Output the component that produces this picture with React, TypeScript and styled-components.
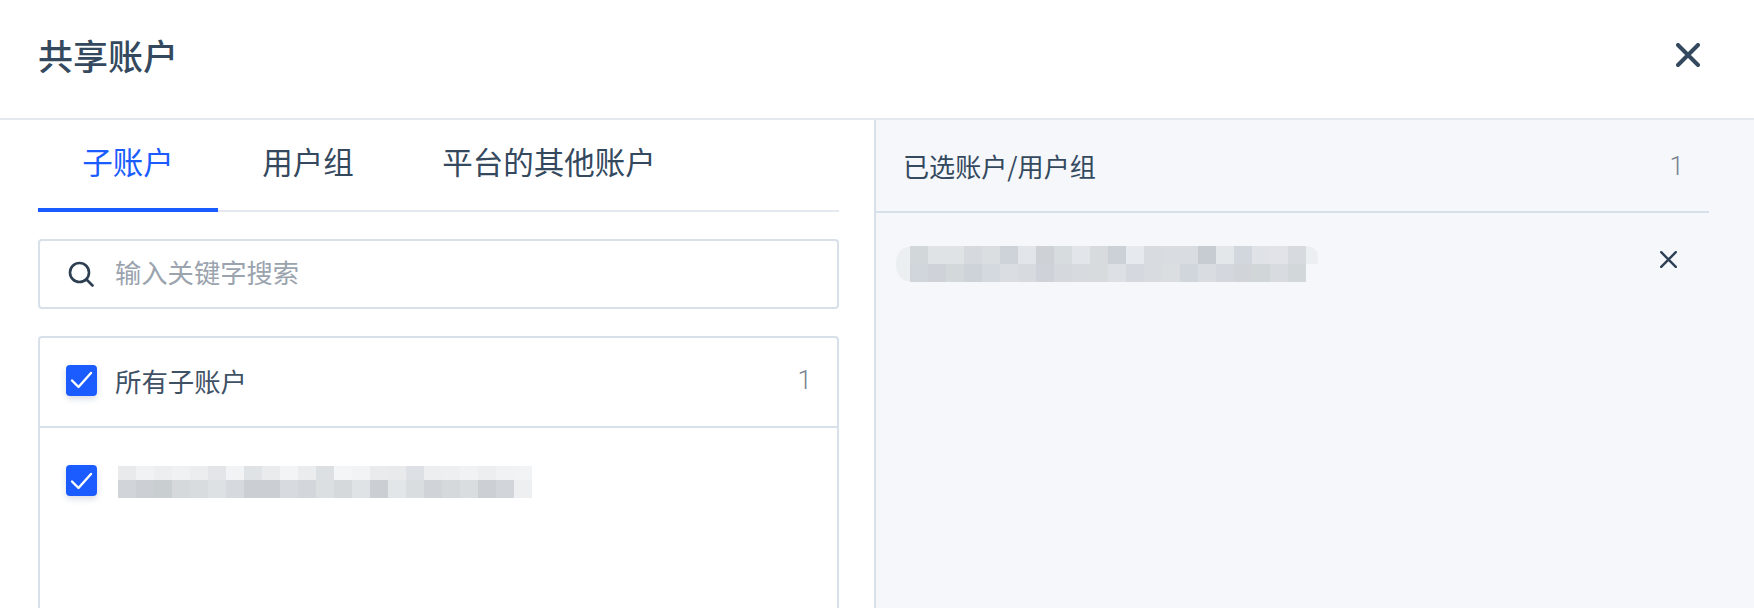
import React from 'react';

import styled, { createGlobalStyle } from 'styled-components';

const GlobalStyle = createGlobalStyle`
  html, body {
    margin: 0;
    padding: 0;
    background: #fff;
  }
  * {
    box-sizing: border-box;
  }
`;

const CELL = 18;

const LEFT_MOSAIC = [
  ['e9eaec', 'f1f2f3', 'edeeef', 'f0f1f2', 'ecedee', 'e3e5e8', 'f2f3f5', 'dfe3e6', 'eaebed', 'f3f4f5', 'ebecee', 'dce0e3', 'f4f5f7', 'f2f3f5', 'eaebed', 'e9eaec', 'dde0e4', 'edeef0', 'eeeff1', 'f1f2f3', 'eceeef', 'f1f2f3', 'f2f3f4'],
  ['d1d4d8', 'ccd0d4', 'c9ced1', 'd5d9dc', 'd8dcdf', 'dde1e4', 'd6d9de', 'cbced2', 'cbced2', 'd7dade', 'd3d6da', 'dbdfe2', 'd6d9dc', 'dfe3e6', 'cbced3', 'e3e6e9', 'd9dde0', 'd0d3d8', 'd6d9dc', 'd9dde0', 'ccd0d4', 'd2d5da', 'eeeff1'],
];

const RIGHT_MOSAIC = [
  ['ced2d6', 'dde0e4', 'dde0e4', 'd2d5d9', 'd7dade', 'c9cdd5', 'e1e4e9', 'c9cdd2', 'd4d8dc', 'e0e3e8', 'd3d7da', 'c7cbd3', 'e5e8ed', 'd5d8dd', 'd6d9de', 'd6d9de', 'c1c5cd', 'e2e5e9', 'ced1d9', 'dde0e5', 'dfe1e6', 'd3d6db'],
  ['cdd0d8', 'cacdd5', 'cfd3d7', 'c9cdd5', 'd0d3dc', 'd7dadf', 'd4d7dc', 'cacdd5', 'd1d5da', 'd3d6db', 'd3d7db', 'dadde2', 'd1d4da', 'd5d8dd', 'd7dade', 'cdd0d8', 'd6d9de', 'd0d3da', 'ccd0d6', 'cdd1d5', 'd5d8dd', 'ced2d6'],
];

// pixelated account names, drawn as a small picture
const LeftMosaic = () => (
  <svg width={414} height={32} viewBox="0 0 414 32" display="block">
    {LEFT_MOSAIC.map((row, y) =>
      row.map((color, x) => (
        <rect key={`${x}-${y}`} x={x * CELL} y={y * 14} width={CELL} height={y ? 18 : 14} fill={`#${color}`} />
      )),
    )}
  </svg>
);

const RightMosaic = () => (
  <svg width={422} height={36} viewBox="0 0 422 36" display="block">
    <path d="M18 0H410Q422 0 422 12V18H410V36H18Q0 36 0 18Q0 0 18 0Z" fill="#ebeff2" />
    {RIGHT_MOSAIC.map((row, y) =>
      row.map((color, x) => (
        <rect key={`${x}-${y}`} x={14 + x * CELL} y={y * CELL} width={CELL} height={CELL} fill={`#${color}`} fillOpacity={0.85} />
      )),
    )}
  </svg>
);

const CloseIcon = ({ size, stroke }: { size: number; stroke: number }) => (
  <svg width={size} height={size} viewBox={`0 0 ${size} ${size}`} fill="none" stroke="currentColor" strokeWidth={stroke} strokeLinecap="round">
    <path d={`M${stroke / 2} ${stroke / 2}L${size - stroke / 2} ${size - stroke / 2}M${size - stroke / 2} ${stroke / 2}L${stroke / 2} ${size - stroke / 2}`} />
  </svg>
);

const SearchIcon = () => (
  <svg width="26" height="26" viewBox="0 0 26 26" fill="none" stroke="#2c3e50" strokeWidth="2.6" strokeLinecap="round">
    <circle cx="11.5" cy="11.5" r="9.5" />
    <path d="M18.5 18.5L24.5 24.5" />
  </svg>
);

const Check = () => (
  <CheckBox>
    <svg width="23" height="18" viewBox="0 0 23 18" fill="none" stroke="#fff" strokeWidth="2.4" strokeLinecap="round" strokeLinejoin="round">
      <path d="M2 9.5L8.5 16L21 2" />
    </svg>
  </CheckBox>
);

const TABS = ['子账户', '用户组', '平台的其他账户'];

const App = () => {
  return (
    <Page>
      <GlobalStyle />
      <Header>
        <Title>共享账户</Title>
        <HeaderClose>
          <CloseIcon size={24} stroke={4} />
        </HeaderClose>
      </Header>
      <Body>
        <LeftPanel>
          <Tabs>
            {TABS.map((tab, index) => (
              <Tab key={tab} $active={index === 0}>
                {tab}
              </Tab>
            ))}
          </Tabs>
          <SearchBox>
            <SearchIcon />
            <Placeholder>输入关键字搜索</Placeholder>
          </SearchBox>
          <ListBox>
            <ListHeader>
              <Check />
              <ListLabel>所有子账户</ListLabel>
              <Count>1</Count>
            </ListHeader>
            <ListRow>
              <Check />
              <MosaicSlot>
                <LeftMosaic />
              </MosaicSlot>
            </ListRow>
          </ListBox>
        </LeftPanel>
        <RightPanel>
          <SelectedHeader>
            <SelectedTitle>已选账户/用户组</SelectedTitle>
            <Count>1</Count>
          </SelectedHeader>
          <SelectedRow>
            <RightMosaic />
            <RowClose>
              <CloseIcon size={17} stroke={2.4} />
            </RowClose>
          </SelectedRow>
        </RightPanel>
      </Body>
    </Page>
  );
};

const Page = styled.div`
  width: 1754px;
  height: 608px;
  overflow: hidden;
  display: flex;
  flex-direction: column;
  background: #fff;
  font-family: 'Noto Sans CJK SC', 'Noto Sans', sans-serif;
  color: #34495e;
`;

const Header = styled.div`
  height: 120px;
  flex-shrink: 0;
  display: flex;
  align-items: center;
  justify-content: space-between;
  padding: 0 54px 6px 38px;
  border-bottom: 2px solid #e4e9f0;
`;

const Title = styled.div`
  font-size: 35px;
  font-weight: 500;
  line-height: 44px;
  margin-bottom: 2px;
`;

const HeaderClose = styled.div`
  display: flex;
  color: #34495e;
  margin-bottom: 2px;
`;

const Body = styled.div`
  flex: 1;
  min-height: 0;
  display: flex;
`;

const LeftPanel = styled.div`
  width: 874px;
  flex-shrink: 0;
  padding: 0 35px 0 38px;
  display: flex;
  flex-direction: column;
`;

const Tabs = styled.div`
  height: 92px;
  flex-shrink: 0;
  display: flex;
  border-bottom: 2px solid #e4e9f0;
`;

const Tab = styled.div<{ $active?: boolean }>`
  height: 92px;
  padding: 0 44.25px 6px;
  display: flex;
  align-items: center;
  font-size: 30.5px;
  color: ${(props) => (props.$active ? '#1a5cff' : '#34495e')};
  border-bottom: 4px solid ${(props) => (props.$active ? '#1a5cff' : 'transparent')};
`;

const SearchBox = styled.div`
  height: 70px;
  flex-shrink: 0;
  margin-top: 27px;
  padding: 0 0 0 28px;
  display: flex;
  align-items: center;
  gap: 21px;
  border: 2px solid #d8e0ea;
  border-radius: 4px;
`;

const Placeholder = styled.div`
  font-size: 26.3px;
  color: #9aa3ae;
  margin-bottom: 6px;
`;

const ListBox = styled.div`
  flex: 1;
  margin-top: 27px;
  border: 2px solid #d8e0ea;
  border-bottom: none;
  border-radius: 4px 4px 0 0;
`;

const ListHeader = styled.div`
  height: 90px;
  display: flex;
  align-items: center;
  padding: 0 25px 4px 26px;
  border-bottom: 2px solid #d8e0ea;
`;

const ListLabel = styled.div`
  flex: 1;
  margin-left: 18px;
  font-size: 26.4px;
  color: #3f5165;
`;

const ListRow = styled.div`
  display: flex;
  align-items: flex-start;
  padding: 37px 0 0 26px;
  gap: 21px;
`;

const MosaicSlot = styled.div`
  margin-top: 1px;
`;

const CheckBox = styled.div`
  width: 31px;
  height: 31px;
  flex-shrink: 0;
  display: flex;
  align-items: center;
  justify-content: center;
  background: #1a5cff;
  border-radius: 4px;
  box-shadow: 0 3px 6px rgba(60, 80, 120, 0.2);
`;

const Count = styled.div`
  font-family: 'Roboto', 'Noto Sans', sans-serif;
  font-size: 26px;
  font-weight: 300;
  color: #76828f;
`;

const RightPanel = styled.div`
  flex: 1;
  background: #f5f7fb;
  border-left: 2px solid #d8e0ea;
`;

const SelectedHeader = styled.div`
  width: 833px;
  height: 93px;
  display: flex;
  align-items: center;
  justify-content: space-between;
  padding: 0 25px 0 27px;
  border-bottom: 2px solid #d8e0ea;
`;

const SelectedTitle = styled.div`
  font-size: 26.1px;
  color: #34495e;
`;

const SelectedRow = styled.div`
  width: 833px;
  display: flex;
  align-items: flex-start;
  justify-content: space-between;
  padding: 33px 0 0 20px;
`;

const RowClose = styled.div`
  display: flex;
  color: #2e4057;
  margin: 5px 32px 0 0;
`;

export default App;
